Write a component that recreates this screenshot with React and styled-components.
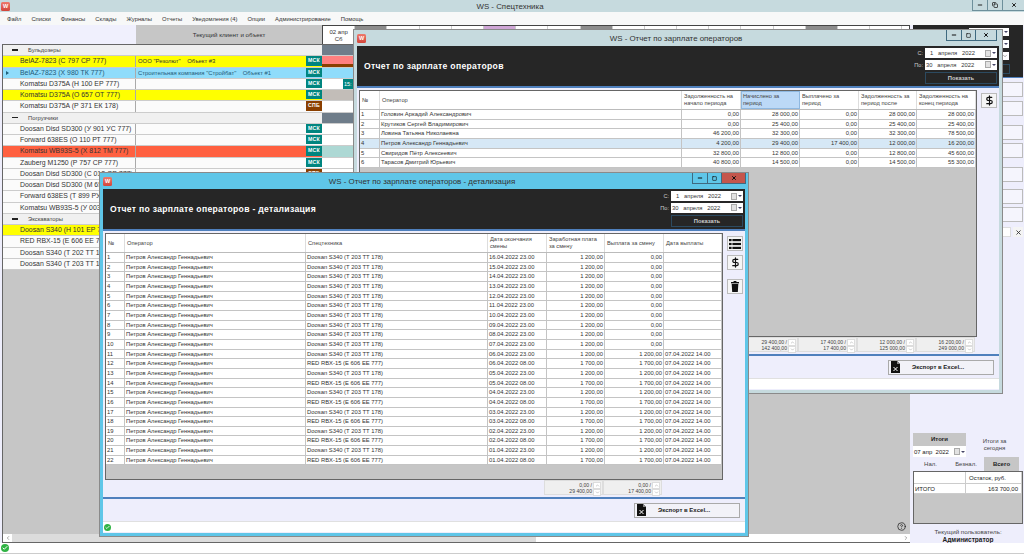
import React from 'react'
import styled, { createGlobalStyle } from 'styled-components'
import { Minus, Square, X, Copy, ChevronUp, ChevronDown, ChevronLeft, ChevronRight, Check, DollarSign, HelpCircle } from 'lucide-react'

const GlobalStyle = createGlobalStyle`
  html, body { margin: 0; padding: 0; background: #fff; }
  body { width: 1024px; height: 555px; overflow: hidden; font-family: "Liberation Sans", Arial, sans-serif; font-size: 6px; color: #222; }
  * { box-sizing: border-box; }
`

const Screen = styled.div`
  position: relative;
  width: 1024px;
  height: 555px;
  overflow: hidden;
  background: #fff;
  display: flex;
  flex-direction: column;
`

const Logo = styled.div`
  width: 9px;
  height: 9px;
  flex: none;
  border-radius: 1.5px;
  background: linear-gradient(#ee7a6c, #d2453a);
  color: #fff;
  font-size: 5.5px;
  line-height: 9px;
  font-weight: 700;
  text-align: center;
`

const MainTitle = styled.div`
  height: 12px;
  flex: none;
  background: #c6dade;
  display: flex;
  align-items: center;
  padding-left: 1px;
  position: relative;
`

const TitleText = styled.div`
  position: absolute;
  left: 60px;
  right: 64px;
  text-align: center;
  font-size: 7.9px;
  color: #333;
`

const MainCtl = styled.div`
  position: absolute;
  right: 0;
  top: 0;
  display: flex;
  height: 11px;
`

const CtlBtn = styled.div`
  width: ${p => p.$w}px;
  height: 100%;
  display: flex;
  align-items: center;
  justify-content: center;
  border-left: 1px solid #6d8f9b;
  border-bottom: 1px solid #6d8f9b;
  color: #222;
`

const Menu = styled.div`
  height: 13px;
  flex: none;
  background: #f7f8f8;
  display: flex;
  align-items: center;
  gap: 10px;
  padding-left: 7px;
  color: #333;
  font-size: 5.85px;
`

const Body = styled.div`
  height: 518px;
  flex: none;
  display: flex;
  background: #eeeefc;
`

const Board = styled.div`
  width: 910px;
  flex: none;
  display: flex;
  flex-direction: column;
`

const BoardHead = styled.div`
  height: 19px;
  flex: none;
  display: flex;
`

const HeadBlank = styled.div`
  width: 136px;
  background: #f0f0fd;
`

const HeadClient = styled.div`
  width: 186px;
  background: #c6c6c6;
  display: flex;
  align-items: center;
  justify-content: center;
  font-size: 6.2px;
  color: #333;
`

const HeadDays = styled.div`
  flex: 1;
  background: #fff;
  border-top: 1px solid #444;
  border-left: 1px solid #444;
  border-right: 1px solid #444;
  display: flex;
  overflow: hidden;
`

const HeadDay = styled.div`
  width: 32.2px;
  flex: none;
  border-right: 1px solid #ccc;
  text-align: center;
  line-height: 7px;
  padding-top: 3px;
  font-size: 6px;
  color: #333;
  background: linear-gradient(${p => p.$mark || '#fff'} 4px, #fff 4px);
`

const Stage = styled.div`
  flex: 1;
  background: #c6c6c6;
  border-left: 1px solid #666;
  border-top: 1px solid #666;
  margin-left: 2px;
  display: flex;
  flex-direction: column;
  min-height: 0;
`

const Rows = styled.div`
  display: flex;
  flex-direction: column;
`

const GroupRow = styled.div`
  height: 11.25px;
  display: grid;
  grid-template-columns: 319px 1fr;
  border-bottom: 1px solid #ccc;
`

const GroupName = styled.div`
  background: #f0f0f0;
  display: flex;
  align-items: center;
  font-size: 5.8px;
  color: #444;
  gap: 10px;
  padding-left: 9px;
`

const Dash = styled.span`
  width: 6px;
  height: 1.5px;
  background: #222;
`

const GroupFill = styled.div`
  background: #6f7d8a;
`

const MachineRow = styled.div`
  height: 11.25px;
  display: grid;
  grid-template-columns: 133px 170px 16px 1fr;
  background: ${p => p.$bg || '#fbfbfb'};
  color: ${p => p.$fg || '#333'};
  border-bottom: 1px solid #ccc;
  font-size: 6.9px;
  line-height: 10px;
  white-space: pre;
`

const MachineName = styled.div`
  padding-left: 17px;
  border-right: 1px solid #aaa;
  position: relative;
  overflow: hidden;
`

const Pointer = styled.span`
  position: absolute;
  left: 3px;
  top: 3px;
  width: 0;
  height: 0;
  border-left: 3px solid #1f5f7a;
  border-top: 2px solid transparent;
  border-bottom: 2px solid transparent;
`

const ClientCell = styled.div`
  padding-left: 2px;
  font-size: 5.9px;
`

const City = styled.div`
  background: ${p => p.$spb ? '#8a3f00' : '#00857f'};
  color: #fff;
  font-size: 5.2px;
  font-weight: 700;
  text-align: center;
  line-height: 9px;
  margin-bottom: 1px;
  letter-spacing: .3px;
`

const Lane = styled.div`
  background: ${p => p.$bg || '#fff'};
  position: relative;
`

const LaneBand = styled.div`
  position: absolute;
  left: 0;
  right: 0;
  bottom: 0;
  height: 3px;
  background: #8a3f00;
`

const LaneChip = styled.div`
  position: absolute;
  left: 21px;
  top: 0;
  bottom: 0;
  width: 12px;
  background: #00857f;
  color: #fff;
  font-size: 5.5px;
  padding-left: 1px;
`

const BoardBar = styled.div`
  margin-top: auto;
  height: 9px;
  flex: none;
  background: #fff;
  display: flex;
  align-items: center;
  border-bottom: 1px solid #666;
  color: #555;
`

const BarEnd = styled.div`
  width: 9px;
  flex: none;
  display: flex;
  align-items: center;
  justify-content: center;
`

const BarThumb = styled.div`
  width: 524px;
  height: 100%;
  background: #dcdcdc;
  margin-right: auto;
`

const Side = styled.div`
  flex: 1;
  display: flex;
  flex-direction: column;
  min-width: 0;
`

const SideTop = styled.div`
  height: 53px;
  background: #262626;
  border-bottom: 1px solid #4f80bd;
  margin: 0 1px 0 3px;
  flex: none;
  display: flex;
  flex-direction: column;
  align-items: flex-end;
  padding: 3px 14px 0 0;
  gap: 4px;
`

const Combo = styled.div`
  width: 40px;
  height: 8px;
  background: #fff;
  display: flex;
  align-items: center;
  justify-content: flex-end;
  padding-right: 1px;
`

const ComboGo = styled.div`
  width: 40px;
  height: 10px;
  margin-right: -1px;
  border: 1px solid #2c4a60;
`

const SideFields = styled.div`
  display: flex;
  flex-direction: column;
  padding: 4px 1px 0 3px;
`

const SideField = styled.div`
  height: 15px;
  margin-bottom: ${p => p.$gap}px;
  background: #f5f5fd;
  border: 1px solid #bbb;
`

const SearchRow = styled.div`
  display: flex;
  justify-content: flex-end;
  gap: 2px;
  height: 10px;
  margin-top: 5px;
  padding-right: 1px;
`

const SearchInput = styled.div`
  flex: 1;
  background: #fff;
  border: 1px solid #ddd;
  margin-left: 3px;
`

const SearchClear = styled.div`
  width: 10px;
  background: #f4f4f4;
  display: flex;
  align-items: center;
  justify-content: center;
  color: #333;
`

const Totals = styled.div`
  margin-top: auto;
  display: flex;
  flex-direction: column;
  padding: 0 1px 0 3px;
  font-size: 6px;
`

const TotalsHead = styled.div`
  display: grid;
  grid-template-columns: 53px 1fr;
  height: 24px;
`

const TotalsBtn = styled.div`
  background: #c6c6c6;
  text-align: center;
  font-weight: 700;
  line-height: 13px;
  height: 13px;
`

const DateBox = styled.div`
  background: #fff;
  height: 11px;
  display: flex;
  justify-content: space-between;
  align-items: center;
  padding: 0 1px;
  white-space: pre;
`

const TodayLabel = styled.div`
  text-align: center;
  line-height: 7px;
  padding-top: 5px;
  color: #444;
`

const Tabs = styled.div`
  display: grid;
  grid-template-columns: 35px 36px 35px;
  text-align: center;
  height: 14px;
  line-height: 14px;
  color: #444;
`

const Tab = styled.div`
  background: ${p => p.$on ? '#c6c6c6' : 'transparent'};
  font-weight: ${p => p.$on ? 700 : 400};
  color: ${p => p.$on ? '#222' : '#444'};
`

const MiniTable = styled.div`
  height: 53px;
  background: #c6c6c6;
  border: 1px solid #666;
`

const MiniRow = styled.div`
  display: grid;
  grid-template-columns: 52px 1fr;
  background: #fff;
  height: ${p => p.$h}px;
  line-height: ${p => p.$h}px;
  border-bottom: 1px solid #ccc;
`

const MiniCell = styled.div`
  padding: 0 ${p => p.$right ? 3 : 1}px 0 ${p => p.$inset || 1}px;
  text-align: ${p => p.$right ? 'right' : 'left'};
  border-right: 1px solid #ccc;
`

const CurrentUser = styled.div`
  text-align: center;
  line-height: 8px;
  padding-top: 4px;
  height: 19px;
  font-size: 6.2px;
  color: #444;
`

const UserName = styled.div`
  font-weight: 700;
  font-size: 6.5px;
  color: #222;
`

const Win = styled.div`
  position: absolute;
  left: ${p => p.$x}px;
  top: ${p => p.$y}px;
  width: 648px;
  height: 363px;
  background: ${p => p.$accent};
  padding: 0 3px 3px;
  display: flex;
  flex-direction: column;
  box-shadow: 0 0 0 1px #8a8a8a;
`

const WinTitle = styled.div`
  height: 16px;
  flex: none;
  position: relative;
  display: flex;
  align-items: center;
`

const WinCtl = styled.div`
  position: absolute;
  right: ${p => p.$right}px;
  top: 0;
  height: 11px;
  display: flex;
`

const WinBtn = styled.div`
  width: ${p => p.$w}px;
  height: 100%;
  display: flex;
  align-items: center;
  justify-content: center;
  color: #111;
  background: ${p => p.$close || 'transparent'};
  border-left: 1px solid #3f6a80;
  border-bottom: 1px solid #3f6a80;
  border-right: ${p => p.$last ? '1px solid #3f6a80' : 'none'};
`

const DarkHead = styled.div`
  height: 42px;
  flex: none;
  background: #262626;
  border-bottom: 2px solid #4f80bd;
  display: flex;
  justify-content: space-between;
  align-items: center;
  padding: 0 2px 0 7px;
`

const DarkTitle = styled.h1`
  margin: 0;
  font-size: 8.6px;
  font-weight: 700;
  color: #fff;
  letter-spacing: .3px;
`

const Filters = styled.div`
  display: flex;
  flex-direction: column;
  gap: 1.5px;
  width: 90px;
`

const FilterRow = styled.div`
  display: flex;
  justify-content: flex-end;
  align-items: center;
  gap: 2px;
  color: #ccc;
  font-size: 5.6px;
`

const DateInput = styled.div`
  width: 72px;
  height: 10px;
  flex: none;
  background: #fff;
  color: #333;
  font-size: 5.8px;
  display: flex;
  align-items: center;
  justify-content: space-between;
  padding: 0 1px 0 ${p => p.$pad}px;
  white-space: pre;
`

const CalMark = styled.span`
  display: flex;
  align-items: center;
`

const CalBox = styled.span`
  width: 6px;
  height: 7px;
  background: #e2e2e2;
  border: 1px solid #aaa;
`

const CalArrow = styled.span`
  width: 0;
  height: 0;
  margin-left: 1px;
  border-top: 2px solid #446;
  border-left: 2px solid transparent;
  border-right: 2px solid transparent;
`

const ShowBtn = styled.div`
  align-self: flex-end;
  width: 72px;
  height: 12px;
  margin-top: 1px;
  border: 1px solid #2c4a60;
  color: #ccc;
  font-weight: 700;
  font-size: 5.8px;
  line-height: 10px;
  text-align: center;
`

const WinBody = styled.div`
  flex: 1;
  min-height: 0;
  background: #eeeefc;
  display: flex;
  flex-direction: column;
`

const GridZone = styled.div`
  display: flex;
  padding: 2px 0 0 2px;
  gap: 4px;
  height: 249px;
  flex: none;
`

const GridBox = styled.div`
  width: ${p => p.$w}px;
  flex: none;
  height: 100%;
  background: #c6c6c6;
  border: 1px solid #666;
  display: flex;
  flex-direction: column;
`

const HeadRow = styled.div`
  display: grid;
  grid-template-columns: ${p => p.$cols};
  background: #fff;
  height: 19px;
  flex: none;
  border-bottom: 1px solid #bbb;
`

const HeadCell = styled.div`
  display: flex;
  align-items: center;
  padding: 0 2px;
  line-height: 7px;
  font-size: 5.7px;
  color: #444;
  border-right: 1px solid #ddd;
  background: ${p => p.$on ? '#bcd9f7' : 'transparent'};
  outline: ${p => p.$on ? '1px solid #8fb8e0' : 'none'};
  outline-offset: -1px;
`

const DataRow = styled.div`
  display: grid;
  grid-template-columns: ${p => p.$cols};
  background: ${p => p.$on ? '#d6e8f6' : '#fff'};
  height: 9.67px;
  flex: none;
  border-bottom: 1px solid #c4c4c4;
  line-height: 8.6px;
  font-size: 5.85px;
  color: #333;
  white-space: nowrap;
`

const Cell = styled.div`
  padding: 0 1px;
  overflow: hidden;
  border-right: 1px solid #c4c4c4;
  text-align: ${p => p.$right ? 'right' : 'left'};
`

const ToolCol = styled.div`
  display: flex;
  flex-direction: column;
  width: 16px;
  flex: none;
  padding-top: 3px;
`

const ToolBtn = styled.div`
  width: 16px;
  height: 15px;
  background: #f5f5f5;
  border: 1px solid #bbb;
  display: flex;
  align-items: center;
  justify-content: center;
  color: #111;
  margin-bottom: ${p => p.$gap || 0}px;
`

const SumZone = styled.div`
  height: 15px;
  flex: none;
  display: flex;
  padding-left: ${p => p.$left}px;
`

const SumBox = styled.div`
  width: ${p => p.$w}px;
  height: 100%;
  background: #efefef;
  border: 1px solid #ddd;
  display: flex;
  justify-content: flex-end;
  font-size: 5.1px;
  line-height: 6px;
  padding: 1px;
  text-align: right;
  color: #444;
  gap: 1px;
`

const Spin = styled.div`
  width: 8px;
  flex: none;
  display: flex;
  flex-direction: column;
  color: #888;
`

const SpinPart = styled.div`
  flex: 1;
  background: #fff;
  border: 1px solid #ddd;
  display: flex;
  align-items: center;
  justify-content: center;
`

const Divider = styled.div`
  height: 2px;
  margin-top: 2px;
  flex: none;
  background: #4f80bd;
`

const WinFoot = styled.div`
  flex: 1;
  display: flex;
  flex-direction: column;
  min-height: 0;
`

const ExportRow = styled.div`
  height: 22px;
  flex: none;
  display: flex;
  justify-content: flex-end;
  align-items: center;
  padding-right: 5px;
`

const ExportBtn = styled.div`
  width: 106px;
  height: 15px;
  background: #f2f2f8;
  border: 1px solid #aaa;
  display: flex;
  align-items: center;
  font-size: 6px;
  font-weight: 700;
  color: #222;
  padding-left: 2px;
  gap: 12px;
`

const StatusBar = styled.div`
  height: 11px;
  margin-bottom: 1px;
  flex: none;
  background: #fff;
  border-top: 1px solid #e0e0e0;
  display: flex;
  align-items: center;
  padding-left: 1px;
`

const OkDot = styled.span`
  width: ${p => p.$size}px;
  height: ${p => p.$size}px;
  border-radius: 50%;
  background: #2fb344;
  color: #fff;
  display: flex;
  align-items: center;
  justify-content: center;
`

const HelpMark = styled.div`
  position: absolute;
  left: 897px;
  top: 522px;
  color: #222;
  display: flex;
`

const BottomStrip = styled.div`
  flex: 1;
  background: #fff;
  border-bottom: 1px solid #ccc;
  margin-bottom: 1px;
  display: flex;
  align-items: center;
  padding-left: 1px;
`

const ListIcon = () => (
  <svg width="12" height="10" viewBox="0 0 12 10" fill="#111">
    <rect x="0" y="0" width="2.6" height="2.2" />
    <rect x="3.4" y="0" width="8.6" height="2.2" />
    <rect x="0" y="3.9" width="2.6" height="2.2" />
    <rect x="3.4" y="3.9" width="8.6" height="2.2" />
    <rect x="0" y="7.8" width="2.6" height="2.2" />
    <rect x="3.4" y="7.8" width="8.6" height="2.2" />
  </svg>
)

const BinIcon = () => (
  <svg width="8" height="11" viewBox="0 0 8 11" fill="#111">
    <rect x="2.6" y="0" width="2.8" height="1" />
    <rect x="0" y="1" width="8" height="1.4" />
    <path d="M.7 3h6.6l-.5 8H1.2z" />
  </svg>
)

const SheetIcon = () => (
  <svg width="9" height="12" viewBox="0 0 9 12">
    <path d="M0 0h6l3 3v9H0z" fill="#111" />
    <path d="M6 0v3h3" fill="#888" />
    <path d="M2.5 6l4 4M6.5 6l-4 4" stroke="#fff" strokeWidth="1" />
  </svg>
)

const machines = [
  { type: 'group', name: 'Бульдозеры' },
  { name: 'BelAZ-7823 (С 797 СР 777)', client: 'ООО "Резолют"    Объект #3', bg: '#ffff00', lane: '#ff8080', band: true },
  { name: 'BelAZ-7823 (Х 980 ТК 777)', client: 'Строительная компания "Стройбат"    Объект #1', bg: '#8fdcfb', fg: '#245a78', lane: '#8fdcfb', on: true },
  { name: 'Komatsu D375A (Н 100 ЕР 777)', chip: true },
  { name: 'Komatsu D375A (О 657 ОТ 777)', bg: '#ffff00', lane: '#c2bdb8' },
  { name: 'Komatsu D375A (Р 371 ЕК 178)', spb: true },
  { type: 'group', name: 'Погрузчики' },
  { name: 'Doosan Disd SD300 (У 901 УС 777)' },
  { name: 'Forward 638ES (О 110 РТ 777)' },
  { name: 'Komatsu WB93S-5 (Х 812 ТМ 777)', bg: '#ff6040', lane: '#add8d4' },
  { name: 'Zauberg M1250 (Р 757 СР 777)' },
  { name: 'Doosan Disd SD300 (С 012 ОР 777)', spb: true },
  { name: 'Doosan Disd SD300 (М 651 СМ 777)' },
  { name: 'Forward 638ES (Т 899 РУ 178)' },
  { name: 'Komatsu WB93S-5 (У 003 ММ 777)' },
  { type: 'group', name: 'Экскаваторы' },
  { name: 'Doosan S340 (Н 101 ЕР 777)', bg: '#ffff00' },
  { name: 'RED RBX-15 (Е 606 ЕЕ 777)' },
  { name: 'Doosan S340 (Т 202 ТТ 178)' },
  { name: 'Doosan S340 (Т 203 ТТ 178)' }
]

const menuItems = ['Файл', 'Списки', 'Финансы', 'Склады', 'Журналы', 'Отчеты', 'Уведомления (4)', 'Опции', 'Администрирование', 'Помощь']

// colored tops of the day columns that stick out above the report windows
const dayMarks = { 1: '#8c8c8c', 5: '#cfa6d6', 8: '#8c8c8c', 15: '#8c8c8c' }
const sideGaps = [4, 9, 3, 9, 7, 3, 0]

const summaryCols = '20px 1fr 59px 59px 59px 58px 59px'
const summary = [
  ['1', 'Головин Аркадий Александрович', '0,00', '28 000,00', '0,00', '28 000,00', '28 000,00'],
  ['2', 'Крутиков Сергей Владимирович', '0,00', '25 400,00', '0,00', '25 400,00', '25 400,00'],
  ['3', 'Ловина Татьяна Николаевна', '46 200,00', '32 300,00', '0,00', '32 300,00', '78 500,00'],
  ['4', 'Петров Александр Геннадьевич', '4 200,00', '29 400,00', '17 400,00', '12 000,00', '16 200,00'],
  ['5', 'Свиридов Пётр Алексеевич', '32 800,00', '12 800,00', '0,00', '12 800,00', '45 600,00'],
  ['6', 'Тарасов Дмитрий Юрьевич', '40 800,00', '14 500,00', '0,00', '14 500,00', '55 300,00']
]

const detailCols = '19px 181px 182px 59px 58px 59px 1fr'
const S340 = 'Doosan S340 (Т 203 ТТ 178)'
const RBX = 'RED RBX-15 (Е 606 ЕЕ 777)'
const detail = [
  ['16.04.2022 23.00', S340, '1 200,00', '0,00', ''],
  ['15.04.2022 23.00', S340, '1 200,00', '0,00', ''],
  ['14.04.2022 23.00', S340, '1 200,00', '0,00', ''],
  ['13.04.2022 23.00', S340, '1 200,00', '0,00', ''],
  ['12.04.2022 23.00', S340, '1 200,00', '0,00', ''],
  ['11.04.2022 23.00', S340, '1 200,00', '0,00', ''],
  ['10.04.2022 23.00', S340, '1 200,00', '0,00', ''],
  ['09.04.2022 23.00', S340, '1 200,00', '0,00', ''],
  ['08.04.2022 23.00', S340, '1 200,00', '0,00', ''],
  ['07.04.2022 23.00', S340, '1 200,00', '0,00', ''],
  ['06.04.2022 23.00', S340, '1 200,00', '1 200,00', '07.04.2022 14.00'],
  ['06.04.2022 08.00', RBX, '1 700,00', '1 700,00', '07.04.2022 14.00'],
  ['05.04.2022 23.00', S340, '1 200,00', '1 200,00', '07.04.2022 14.00'],
  ['05.04.2022 08.00', RBX, '1 700,00', '1 700,00', '07.04.2022 14.00'],
  ['04.04.2022 23.00', S340, '1 200,00', '1 200,00', '07.04.2022 14.00'],
  ['04.04.2022 08.00', RBX, '1 700,00', '1 700,00', '07.04.2022 14.00'],
  ['03.04.2022 23.00', S340, '1 200,00', '1 200,00', '07.04.2022 14.00'],
  ['03.04.2022 08.00', RBX, '1 700,00', '1 700,00', '07.04.2022 14.00'],
  ['02.04.2022 23.00', S340, '1 200,00', '1 200,00', '07.04.2022 14.00'],
  ['02.04.2022 08.00', RBX, '1 700,00', '1 700,00', '07.04.2022 14.00'],
  ['01.04.2022 23.00', S340, '1 200,00', '1 200,00', '07.04.2022 14.00'],
  ['01.04.2022 08.00', RBX, '1 700,00', '1 700,00', '07.04.2022 14.00']
]

const Cal = () => <CalMark><CalBox /><CalArrow /></CalMark>

const WindowBar = ({ title, close, closeW, right }) => (
  <WinTitle>
    <Logo>W</Logo>
    <TitleText>{title}</TitleText>
    <WinCtl $right={right}>
      <WinBtn $w={15}><Minus size={6} strokeWidth={4} /></WinBtn>
      <WinBtn $w={14}><Square size={5} strokeWidth={3} /></WinBtn>
      <WinBtn $w={closeW} $close={close} $last><X size={6} strokeWidth={4} /></WinBtn>
    </WinCtl>
  </WinTitle>
)

const ReportHead = ({ title }) => (
  <DarkHead>
    <DarkTitle>{title}</DarkTitle>
    <Filters>
      <FilterRow>С:<DateInput $pad={5}>{'1   апреля   2022'}<Cal /></DateInput></FilterRow>
      <FilterRow>По:<DateInput $pad={1}>{'30   апреля   2022'}<Cal /></DateInput></FilterRow>
      <ShowBtn>Показать</ShowBtn>
    </Filters>
  </DarkHead>
)

const Sum = ({ w, a, b }) => (
  <SumBox $w={w}>
    <div>{a} /<br />{b}</div>
    <Spin>
      <SpinPart><ChevronUp size={5} /></SpinPart>
      <SpinPart><ChevronDown size={5} /></SpinPart>
    </Spin>
  </SumBox>
)

const Foot = () => (
  <WinFoot>
    <Divider />
    <ExportRow>
      <ExportBtn><SheetIcon />Экспорт в Excel...</ExportBtn>
    </ExportRow>
  </WinFoot>
)

export default () => (
  <Screen>
    <GlobalStyle />
    <MainTitle>
      <Logo>W</Logo>
      <TitleText>WS - Спецтехника</TitleText>
      <MainCtl>
        <CtlBtn $w={15}><Minus size={6} strokeWidth={4} /></CtlBtn>
        <CtlBtn $w={15}><Copy size={6} strokeWidth={3} /></CtlBtn>
        <CtlBtn $w={22}><X size={6} strokeWidth={4} /></CtlBtn>
      </MainCtl>
    </MainTitle>
    <Menu>{menuItems.map(m => <span key={m}>{m}</span>)}</Menu>
    <Body>
      <Board>
        <BoardHead>
          <HeadBlank />
          <HeadClient>Текущий клиент и объект</HeadClient>
          <HeadDays>
            {[...Array(18)].map((v, i) => (
              <HeadDay key={i} $mark={dayMarks[i]}>
                {i === 0 && <>02 апр<br />Сб</>}
              </HeadDay>
            ))}
          </HeadDays>
        </BoardHead>
        <Stage>
          <Rows>
            {machines.map((m, i) => m.type === 'group'
              ? (
                <GroupRow key={i}>
                  <GroupName><Dash />{m.name}</GroupName>
                  <GroupFill />
                </GroupRow>
              )
              : (
                <MachineRow key={i} $bg={m.bg} $fg={m.fg}>
                  <MachineName>{m.on && <Pointer />}{m.name}</MachineName>
                  <ClientCell>{m.client}</ClientCell>
                  <City $spb={m.spb}>{m.spb ? 'СПБ' : 'МСК'}</City>
                  <Lane $bg={m.lane}>
                    {m.band && <LaneBand />}
                    {m.chip && <LaneChip>15:</LaneChip>}
                  </Lane>
                </MachineRow>
              ))}
          </Rows>
          <BoardBar>
            <BarEnd><ChevronLeft size={6} /></BarEnd>
            <BarThumb />
            <BarEnd><ChevronRight size={6} /></BarEnd>
          </BoardBar>
        </Stage>
      </Board>
      <Side>
        <SideTop>
          <Combo><CalArrow /></Combo>
          <Combo><CalArrow /></Combo>
          <Combo><ChevronDown size={6} color="#555" /></Combo>
          <ComboGo />
        </SideTop>
        <SideFields>
          {sideGaps.map((g, i) => <SideField key={i} $gap={g} />)}
        </SideFields>
        <SearchRow>
          <SearchInput />
          <SearchClear><X size={7} strokeWidth={3} /></SearchClear>
        </SearchRow>
        <Totals>
          <TotalsHead>
            <div>
              <TotalsBtn>Итоги</TotalsBtn>
              <DateBox>{'07 апр  2022'}<Cal /></DateBox>
            </div>
            <TodayLabel>Итоги за<br />сегодня</TodayLabel>
          </TotalsHead>
          <Tabs>
            <Tab>Нал.</Tab>
            <Tab>Безнал.</Tab>
            <Tab $on>Всего</Tab>
          </Tabs>
          <MiniTable>
            <MiniRow $h={12}><MiniCell /><MiniCell $inset={3}>Остаток, руб.</MiniCell></MiniRow>
            <MiniRow $h={10}><MiniCell>ИТОГО</MiniCell><MiniCell $right>163 700,00</MiniCell></MiniRow>
          </MiniTable>
          <CurrentUser>
            Текущий пользователь:
            <UserName>Администратор</UserName>
          </CurrentUser>
        </Totals>
      </Side>
    </Body>
    <BottomStrip><OkDot $size={8}><Check size={6} strokeWidth={4} /></OkDot></BottomStrip>
    <HelpMark><HelpCircle size={9} /></HelpMark>

    <Win $x={354} $y={30} $accent="#c6dade">
      <WindowBar title="WS - Отчет по зарплате операторов" closeW={22} right={2} />
      <ReportHead title="Отчет по зарплате операторов" />
      <WinBody>
        <GridZone>
          <GridBox $w={618}>
            <HeadRow $cols={summaryCols}>
              <HeadCell>№</HeadCell>
              <HeadCell>Оператор</HeadCell>
              <HeadCell>Задолженность на начало периода</HeadCell>
              <HeadCell $on>Начислено за период</HeadCell>
              <HeadCell>Выплачено за период</HeadCell>
              <HeadCell>Задолженность за период после</HeadCell>
              <HeadCell>Задолженность на конец периода</HeadCell>
            </HeadRow>
            {summary.map(r => (
              <DataRow key={r[0]} $cols={summaryCols} $on={r[0] === '4'}>
                {r.map((c, i) => <Cell key={i} $right={i > 1}>{c}</Cell>)}
              </DataRow>
            ))}
          </GridBox>
          <ToolCol>
            <ToolBtn><DollarSign size={11} strokeWidth={2.6} /></ToolBtn>
          </ToolCol>
        </GridZone>
        <SumZone $left={382}>
          <Sum w={59} a="29 400,00" b="142 400,00" />
          <Sum w={59} a="17 400,00" b="17 400,00" />
          <Sum w={59} a="12 000,00" b="125 000,00" />
          <Sum w={59} a="16 200,00" b="249 000,00" />
        </SumZone>
        <Foot />
        <StatusBar />
      </WinBody>
    </Win>

    <Win $x={100} $y={173} $accent="#5fc6e8">
      <WindowBar title="WS - Отчет по зарплате операторов - детализация" close="#c4564c" closeW={25} right={-1} />
      <ReportHead title="Отчет по зарплате операторов - детализация" />
      <WinBody>
        <GridZone>
          <GridBox $w={618}>
            <HeadRow $cols={detailCols}>
              <HeadCell>№</HeadCell>
              <HeadCell>Оператор</HeadCell>
              <HeadCell>Спецтехника</HeadCell>
              <HeadCell>Дата окончания смены</HeadCell>
              <HeadCell>Заработная плата за смену</HeadCell>
              <HeadCell>Выплата за смену</HeadCell>
              <HeadCell>Дата выплаты</HeadCell>
            </HeadRow>
            {detail.map((r, n) => (
              <DataRow key={n} $cols={detailCols}>
                <Cell>{n + 1}</Cell>
                <Cell>Петров Александр Геннадьевич</Cell>
                <Cell>{r[1]}</Cell>
                <Cell>{r[0]}</Cell>
                <Cell $right>{r[2]}</Cell>
                <Cell $right>{r[3]}</Cell>
                <Cell>{r[4]}</Cell>
              </DataRow>
            ))}
          </GridBox>
          <ToolCol>
            <ToolBtn $gap={4}><ListIcon /></ToolBtn>
            <ToolBtn $gap={9}><DollarSign size={11} strokeWidth={2.6} /></ToolBtn>
            <ToolBtn><BinIcon /></ToolBtn>
          </ToolCol>
        </GridZone>
        <SumZone $left={441}>
          <Sum w={59} a="0,00" b="29 400,00" />
          <Sum w={59} a="0,00" b="17 400,00" />
        </SumZone>
        <Foot />
        <StatusBar><OkDot $size={7}><Check size={5} strokeWidth={4} /></OkDot></StatusBar>
      </WinBody>
    </Win>
  </Screen>
)
